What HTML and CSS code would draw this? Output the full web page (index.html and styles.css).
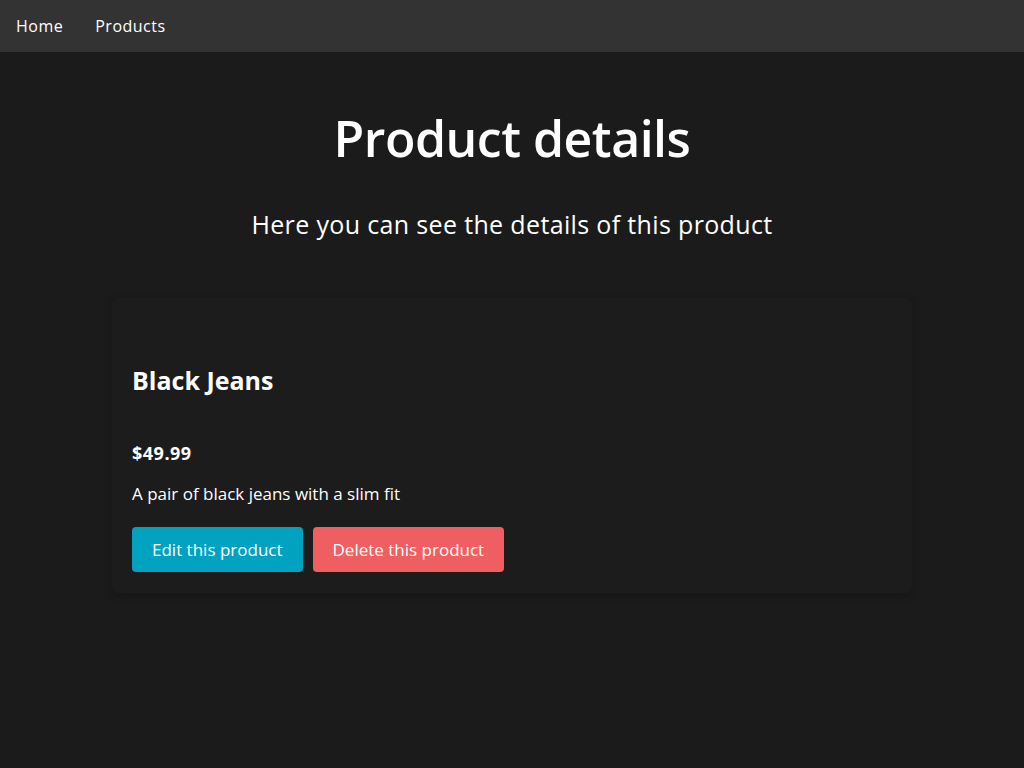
FILE: index.html
```html
<!DOCTYPE html>
<html lang="en">
<head>
<meta charset="utf-8">
<title>Product details</title>
<link rel="stylesheet" href="styles.css">
</head>
<body>
<nav class="nav">
  <a class="nav-link" href="#">Home</a>
  <a class="nav-link" href="#">Products</a>
</nav>
<main class="main">
  <h1 class="title">Product details</h1>
  <p class="subtitle">Here you can see the details of this product</p>
  <section class="card">
    <h2 class="card-name">Black Jeans</h2>
    <p class="card-price">$49.99</p>
    <p class="card-desc">A pair of black jeans with a slim fit</p>
    <div class="actions">
      <a class="btn btn-edit" href="#">Edit this product</a>
      <a class="btn btn-delete" href="#">Delete this product</a>
    </div>
  </section>
</main>
</body>
</html>
```

FILE: styles.css
```css
* { box-sizing: border-box; }
html, body { margin: 0; padding: 0; }
body {
  background: #1b1b1b;
  color: #ffffff;
  font-family: "Open Sans", "DejaVu Sans", sans-serif;
  min-height: 768px;
}
.nav {
  display: flex;
  height: 52px;
  align-items: center;
  background: #333333;
}
.nav-link {
  color: #ffffff;
  text-decoration: none;
  font-size: 16px;
  letter-spacing: 0.5px;
  padding: 0 16px;
  line-height: 20px;
}
.main {
  display: flex;
  flex-direction: column;
  align-items: center;
}
.title {
  margin: 50px 0 0;
  font-size: 50px;
  line-height: 72px;
  font-weight: 600;
  letter-spacing: -0.5px;
}
.subtitle {
  margin: 34px 0 0;
  font-size: 25px;
  line-height: 32px;
  letter-spacing: 0.35px;
}
.card {
  width: 800px;
  margin-top: 58px;
  padding: 40px 20px 21px;
  background: #1c1c1c;
  border-radius: 6px;
  box-shadow: 0 0 6px rgba(255,255,255,0.02), 0 2px 8px rgba(0,0,0,0.25);
  text-align: left;
}
.card-name {
  margin: 26px 0 0;
  font-size: 25px;
  line-height: 32px;
  font-weight: 700;
}
.card-price {
  margin: 45px 0 0;
  font-size: 18px;
  line-height: 24px;
  font-weight: 700;
  letter-spacing: 0.5px;
}
.card-desc {
  margin: 17px 0 0;
  font-size: 17px;
  line-height: 24px;
}
.actions {
  display: flex;
  gap: 10px;
  margin-top: 21px;
}
.btn {
  display: inline-block;
  height: 45px;
  line-height: 45px;
  padding: 0 20px;
  border-radius: 4px;
  color: #ffffff;
  text-decoration: none;
  font-size: 17px;
}
.btn-edit { background: #00a2bf; }
.btn-delete { background: #ef5e60; }
```
